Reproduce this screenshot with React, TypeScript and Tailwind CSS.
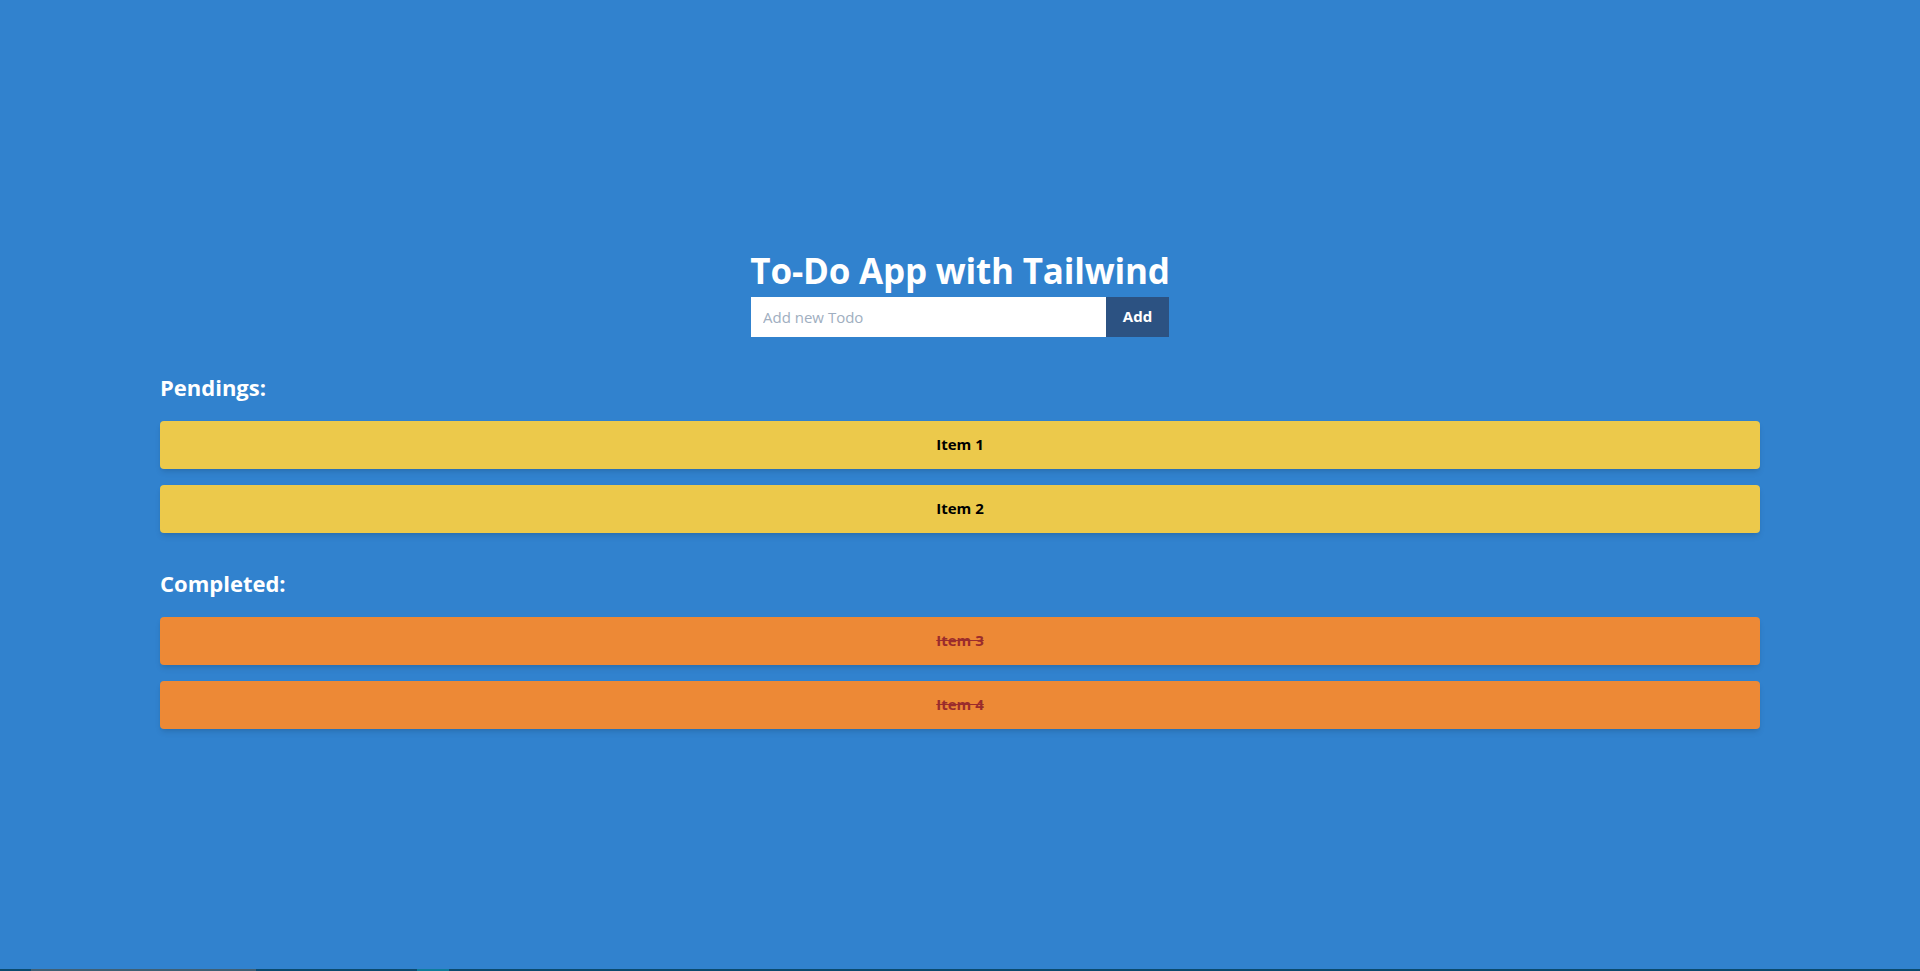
import { useState } from 'react';

type Todo = { id: number; text: string; done: boolean };

const initialTodos: Todo[] = [
    { id: 1, text: 'Item 1', done: false },
    { id: 2, text: 'Item 2', done: false },
    { id: 3, text: 'Item 3', done: true },
    { id: 4, text: 'Item 4', done: true },
];

export default function App() {
    const [todos, setTodos] = useState<Todo[]>(initialTodos);
    const [value, setValue] = useState<string>('');

    const handleAdd = () => {
        if (!value.trim()) return;
        setTodos([...todos, { id: Date.now(), text: value, done: false }]);
        setValue('');
    };

    const toggle = (id: number) => {
        setTodos(todos.map((t) => (t.id === id ? { ...t, done: !t.done } : t)));
    };

    const pendings = todos.filter((t) => !t.done);
    const completed = todos.filter((t) => t.done);

    return (
        <div className="w-full h-screen bg-[#3182ce] flex flex-col font-['Open_Sans','Noto_Sans',sans-serif]">
            <div className="flex-1 flex flex-col items-center justify-center pt-[10px]">
                <h1 className="text-[35px] leading-[40px] font-bold text-white tracking-[-0.2px]">To-Do App with Tailwind</h1>
                <div className="flex mt-[6px]">
                    <input
                        type="text"
                        placeholder="Add new Todo"
                        value={value}
                        onChange={(e) => setValue(e.target.value)}
                        className="w-[355px] h-[40px] px-3 bg-white text-[15px] text-gray-800 placeholder:text-[#a0aec0] outline-none"
                    />
                    <button
                        className="w-[63px] h-[40px] bg-[#2c5282] text-white font-bold text-[15px]"
                        onClick={handleAdd}
                    >
                        Add
                    </button>
                </div>
                <div className="w-[1600px] mt-[36px] flex flex-col">
                    <div className="flex flex-col">
                        <h2 className="text-[22px] leading-7 font-bold text-white mb-5">Pendings:</h2>
                        <div className="flex flex-col gap-4">
                            {pendings.map((t) => (
                                <div
                                    key={t.id}
                                    onClick={() => toggle(t.id)}
                                    className="h-12 flex items-center justify-center rounded bg-[#ecc94b] shadow-md text-black font-bold text-[15px] cursor-pointer"
                                >
                                    {t.text}
                                </div>
                            ))}
                        </div>
                    </div>
                    <div className="flex flex-col mt-[36px]">
                        <h2 className="text-[22px] leading-7 font-bold text-white mb-5">Completed:</h2>
                        <div className="flex flex-col gap-4">
                            {completed.map((t) => (
                                <div
                                    key={t.id}
                                    onClick={() => toggle(t.id)}
                                    className="h-12 flex items-center justify-center rounded bg-[#ed8936] shadow-md text-[#9b2c2c] line-through font-bold text-[15px] cursor-pointer"
                                >
                                    {t.text}
                                </div>
                            ))}
                        </div>
                    </div>
                </div>
            </div>
            <div className="h-[2px] flex">
                <div className="w-[31px] bg-[#0b4a6e]"></div>
                <div className="w-[225px] bg-[#3f5f73]"></div>
                <div className="w-[161px] bg-[#0b4a6e]"></div>
                <div className="w-[32px] bg-[#0e7c9a]"></div>
                <div className="flex-1 bg-[#0b4a6e]"></div>
            </div>
        </div>
    );
}
